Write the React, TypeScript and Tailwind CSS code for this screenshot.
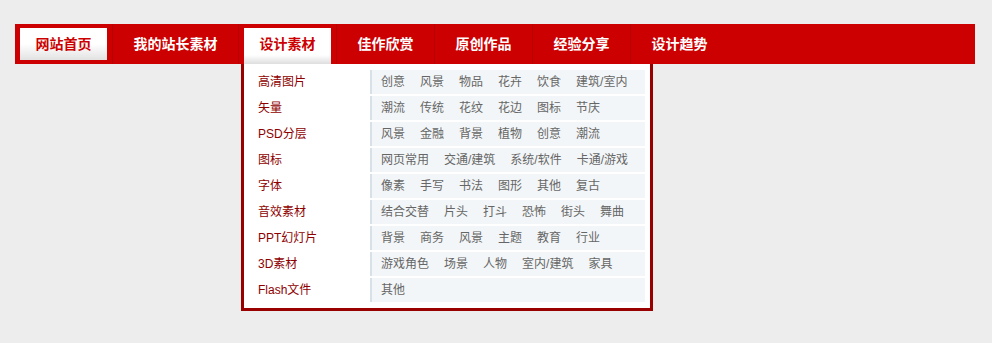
import React from 'react';

const navItems = ['网站首页', '我的站长素材', '设计素材', '佳作欣赏', '原创作品', '经验分享', '设计趋势'];

const categories: { name: string; tags: string[] }[] = [
  { name: '高清图片', tags: ['创意', '风景', '物品', '花卉', '饮食', '建筑/室内'] },
  { name: '矢量', tags: ['潮流', '传统', '花纹', '花边', '图标', '节庆'] },
  { name: 'PSD分层', tags: ['风景', '金融', '背景', '植物', '创意', '潮流'] },
  { name: '图标', tags: ['网页常用', '交通/建筑', '系统/软件', '卡通/游戏'] },
  { name: '字体', tags: ['像素', '手写', '书法', '图形', '其他', '复古'] },
  { name: '音效素材', tags: ['结合交替', '片头', '打斗', '恐怖', '街头', '舞曲'] },
  { name: 'PPT幻灯片', tags: ['背景', '商务', '风景', '主题', '教育', '行业'] },
  { name: '3D素材', tags: ['游戏角色', '场景', '人物', '室内/建筑', '家具'] },
  { name: 'Flash文件', tags: ['其他'] },
];

const font = { fontFamily: '"Liberation Sans", "Noto Sans CJK SC", sans-serif' };

const Dropdown: React.FC = () => (
  <div className="absolute left-[2px] top-full z-10 w-[412px] border-x-[3px] border-b-[3px] border-[#990000] bg-white">
    <div className="flex py-[6px] pr-[5px]">
      <div className="w-[126px]">
        {categories.map((c, i) => (
          <div
            key={c.name}
            className={'flex h-6 items-center pl-[14px] text-[12px] text-[#8e0000] ' + (i < categories.length - 1 ? 'mb-[2px]' : '')}
          >
            {c.name}
          </div>
        ))}
      </div>
      <div className="flex-1">
        {categories.map((c, i) => (
          <div
            key={c.name}
            className={'flex h-6 items-center gap-[15px] border-l-2 border-[#d9e1e8] bg-[#f3f6f8] pl-[9px] text-[12px] text-[#666666] ' + (i < categories.length - 1 ? 'mb-[2px]' : '')}
          >
            {c.tags.map((t, j) => (
              <span key={j}>{t}</span>
            ))}
          </div>
        ))}
      </div>
    </div>
  </div>
);

export default function App() {
  return (
    <div className="min-h-screen bg-[#ededed] pl-[15px] pt-6" style={font}>
      <div className="h-10 w-[960px] bg-[#cc0000]">
        <ul className="flex h-full">
          {navItems.map((item, i) => {
            const last = i === navItems.length - 1;
            const w = item.length > 4 ? 'w-[115px]' : 'w-[87px]';
            return (
              <li
                key={item}
                className={'relative flex h-full px-[5px] pt-1 ' + (last ? '' : 'border-r border-[#b80000]')}
              >
                {i === 0 && (
                  <span className={'flex h-8 items-center justify-center bg-linear-to-b from-white via-white to-[#e2e2e2] text-[14px] font-bold text-[#cc0000] ' + w}>
                    {item}
                  </span>
                )}
                {i === 2 && (
                  <>
                    <span className={'flex h-9 items-center justify-center bg-linear-to-b from-white from-75% to-[#dedede] pb-1 text-[14px] font-bold text-[#cc0000] ' + w}>
                      {item}
                    </span>
                    <Dropdown />
                  </>
                )}
                {i !== 0 && i !== 2 && (
                  <span className={'flex h-8 items-center justify-center text-[14px] font-bold text-white ' + w}>{item}</span>
                )}
              </li>
            );
          })}
        </ul>
      </div>
    </div>
  );
}
